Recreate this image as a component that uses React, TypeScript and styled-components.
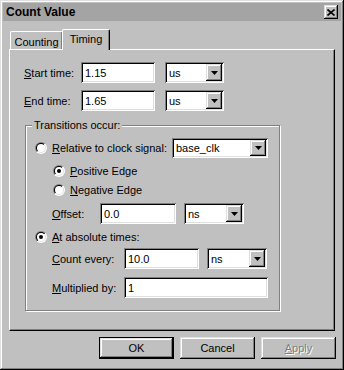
import React from 'react';
import styled, { createGlobalStyle, css } from 'styled-components';

const face = '#c0c0c0';

const GlobalStyle = createGlobalStyle`
  html, body {
    margin: 0;
    padding: 0;
    background: ${face};
  }
  body {
    font-family: "Liberation Sans", Arial, sans-serif;
    font-size: 11px;
    color: #000;
  }
  * {
    box-sizing: border-box;
  }
`;

const raised = css`
  background: ${face};
  box-shadow: inset -1px -1px #000, inset 1px 1px #dfdfdf,
    inset -2px -2px #808080, inset 2px 2px #fff;
`;

const sunken = css`
  background: #fff;
  box-shadow: inset 1px 1px #808080, inset -1px -1px #fff,
    inset 2px 2px #000, inset -2px -2px #dfdfdf;
`;

const Window = styled.div`
  width: 344px;
  height: 370px;
  padding: 3px;
  display: flex;
  flex-direction: column;
  ${raised};
`;

const TitleBar = styled.div`
  height: 18px;
  background: #a4a4a4;
  display: flex;
  align-items: center;
  justify-content: space-between;
  padding: 0 3px 0 3px;
`;

const TitleText = styled.span`
  font-weight: bold;
  font-size: 12px;
`;

const CloseBtn = styled.div`
  width: 14px;
  height: 14px;
  display: flex;
  align-items: center;
  justify-content: center;
  ${raised};
`;

const Body = styled.div`
  padding: 0 6px;
  display: flex;
  flex-direction: column;
`;

const TabRow = styled.div`
  margin-top: 8px;
  height: 20px;
  display: flex;
  align-items: flex-end;
  padding-left: 1px;
`;

const Tab = styled.div<{ $active?: boolean; $w: number }>`
  position: relative;
  width: ${p => p.$w}px;
  height: ${p => (p.$active ? 21 : 18)}px;
  margin-bottom: ${p => (p.$active ? -1 : 0)}px;
  margin-left: ${p => (p.$active ? -1 : 0)}px;
  padding-top: ${p => (p.$active ? 3 : 4)}px;
  z-index: ${p => (p.$active ? 1 : 0)};
  text-align: center;
  background: ${face};
  border-top: 1px solid #fff;
  border-left: 1px solid #fff;
  border-right: 1px solid #000;
  border-radius: 2px 2px 0 0;
  box-shadow: inset -1px 0 #808080;
  line-height: 13px;
`;

const Panel = styled.div`
  width: 326px;
  height: 282px;
  border: 1px solid;
  border-color: #fff #000 #000 #fff;
  box-shadow: inset -1px -1px #808080;
  padding: 12px 0 0 14px;
  display: flex;
  flex-direction: column;
`;

const Row = styled.div<{ $top?: number; $indent?: number; $h?: number }>`
  display: flex;
  align-items: center;
  height: ${p => p.$h ?? 21}px;
  margin-top: ${p => p.$top ?? 0}px;
  margin-left: ${p => p.$indent ?? 0}px;
`;

const Label = styled.span<{ $w: number }>`
  width: ${p => p.$w}px;
  flex: none;
  white-space: nowrap;
`;

const TextBox = styled.div<{ $w: number; $h?: number }>`
  width: ${p => p.$w}px;
  height: ${p => p.$h ?? 21}px;
  flex: none;
  padding-left: 4px;
  display: flex;
  align-items: center;
  ${sunken};
`;

const Combo = styled.div<{ $w: number; $gap?: number; $h?: number }>`
  width: ${p => p.$w}px;
  height: ${p => p.$h ?? 21}px;
  margin-left: ${p => p.$gap ?? 0}px;
  flex: none;
  display: flex;
  align-items: center;
  padding: 2px 2px 2px 4px;
  ${sunken};
`;

const ComboText = styled.span`
  flex: 1;
`;

const DropBtn = styled.div`
  width: 16px;
  height: 100%;
  display: flex;
  align-items: center;
  justify-content: center;
  ${raised};
`;

const Group = styled.div`
  position: relative;
  margin-top: 14px;
  margin-left: 1px;
  width: 255px;
  height: 186px;
  border: 1px solid #808080;
  box-shadow: inset 1px 1px #fff, 1px 1px #fff;
  padding: 12px 0 0 9px;
  display: flex;
  flex-direction: column;
`;

const Legend = styled.span`
  position: absolute;
  top: -7px;
  left: 6px;
  padding: 0 2px;
  line-height: 13px;
  background: ${face};
`;

const RadioOuter = styled.span`
  width: 12px;
  height: 12px;
  flex: none;
  border-radius: 50%;
  background: linear-gradient(135deg, #808080 50%, #fff 50%);
  display: flex;
  align-items: center;
  justify-content: center;
`;

const RadioInner = styled.span`
  width: 10px;
  height: 10px;
  border-radius: 50%;
  background: linear-gradient(135deg, #000 50%, #dfdfdf 50%);
  display: flex;
  align-items: center;
  justify-content: center;
`;

const RadioFace = styled.span`
  width: 8px;
  height: 8px;
  border-radius: 50%;
  background: #fff;
  display: flex;
  align-items: center;
  justify-content: center;
`;

const Dot = styled.span`
  width: 4px;
  height: 4px;
  border-radius: 50%;
  background: #000;
`;

const RadioText = styled.span<{ $w?: number }>`
  margin-left: 5px;
  white-space: nowrap;
  ${p => p.$w && `width: ${p.$w}px;`}
`;

const ButtonRow = styled.div`
  margin-top: 6px;
  margin-right: -1px;
  display: flex;
  justify-content: flex-end;
  gap: 6px;
`;

const Button = styled.div<{ $default?: boolean; $disabled?: boolean }>`
  width: 75px;
  height: 22px;
  display: flex;
  align-items: center;
  justify-content: center;
  ${raised};
  ${p =>
    p.$default &&
    `border: 1px solid #000;`}
  ${p =>
    p.$disabled &&
    `color: #808080; text-shadow: 1px 1px #fff;`}
`;

const Arrow = () => (
  <svg width="7" height="4" viewBox="0 0 7 4">
    <polygon points="0,0 7,0 3.5,4" fill="#000" />
  </svg>
);

const Radio = ({ checked }: { checked?: boolean }) => (
  <RadioOuter>
    <RadioInner>
      <RadioFace>{checked && <Dot />}</RadioFace>
    </RadioInner>
  </RadioOuter>
);

const Dropdown = ({ value, w, gap, h }: { value: string; w: number; gap?: number; h?: number }) => (
  <Combo $w={w} $gap={gap} $h={h}>
    <ComboText>{value}</ComboText>
    <DropBtn>
      <Arrow />
    </DropBtn>
  </Combo>
);

export default function App() {
  return (
    <>
      <GlobalStyle />
      <Window>
        <TitleBar>
          <TitleText>Count Value</TitleText>
          <CloseBtn>
            <svg width="8" height="7" viewBox="0 0 8 7">
              <path d="M0.5 0.5 L7.5 6.5 M7.5 0.5 L0.5 6.5" stroke="#000" strokeWidth="1.6" />
            </svg>
          </CloseBtn>
        </TitleBar>
        <Body>
          <TabRow>
            <Tab $w={53}>Counting</Tab>
            <Tab $w={48} $active>
              Timing
            </Tab>
          </TabRow>
          <Panel>
            <Row>
              <Label $w={57}>
                <u>S</u>tart time:
              </Label>
              <TextBox $w={74}>1.15</TextBox>
              <Dropdown value="us" w={59} gap={10} />
            </Row>
            <Row $top={7}>
              <Label $w={57}>
                <u>E</u>nd time:
              </Label>
              <TextBox $w={74}>1.65</TextBox>
              <Dropdown value="us" w={59} gap={10} />
            </Row>
            <Group>
              <Legend>Transitions occur:</Legend>
              <Row $h={20}>
                <Radio />
                <RadioText $w={120}>
                  <u>R</u>elative to clock signal:
                </RadioText>
                <Dropdown value="base_clk" w={96} h={20} />
              </Row>
              <Row $top={5} $h={16} $indent={18}>
                <Radio checked />
                <RadioText>
                  <u>P</u>ositive Edge
                </RadioText>
              </Row>
              <Row $top={3} $h={16} $indent={18}>
                <Radio />
                <RadioText>
                  <u>N</u>egative Edge
                </RadioText>
              </Row>
              <Row $top={5} $indent={17}>
                <Label $w={48}>
                  <u>O</u>ffset:
                </Label>
                <TextBox $w={76}>0.0</TextBox>
                <Dropdown value="ns" w={60} gap={8} />
              </Row>
              <Row $top={5} $h={16}>
                <Radio checked />
                <RadioText>
                  <u>A</u>t absolute times:
                </RadioText>
              </Row>
              <Row $top={3} $indent={17}>
                <Label $w={72}>
                  <u>C</u>ount every:
                </Label>
                <TextBox $w={75}>10.0</TextBox>
                <Dropdown value="ns" w={60} gap={8} />
              </Row>
              <Row $top={8} $indent={17}>
                <Label $w={72}>
                  <u>M</u>ultiplied by:
                </Label>
                <TextBox $w={144}>1</TextBox>
              </Row>
            </Group>
          </Panel>
          <ButtonRow>
            <Button $default>OK</Button>
            <Button>Cancel</Button>
            <Button $disabled>
              <span>
                <u>A</u>pply
              </span>
            </Button>
          </ButtonRow>
        </Body>
      </Window>
    </>
  );
}
